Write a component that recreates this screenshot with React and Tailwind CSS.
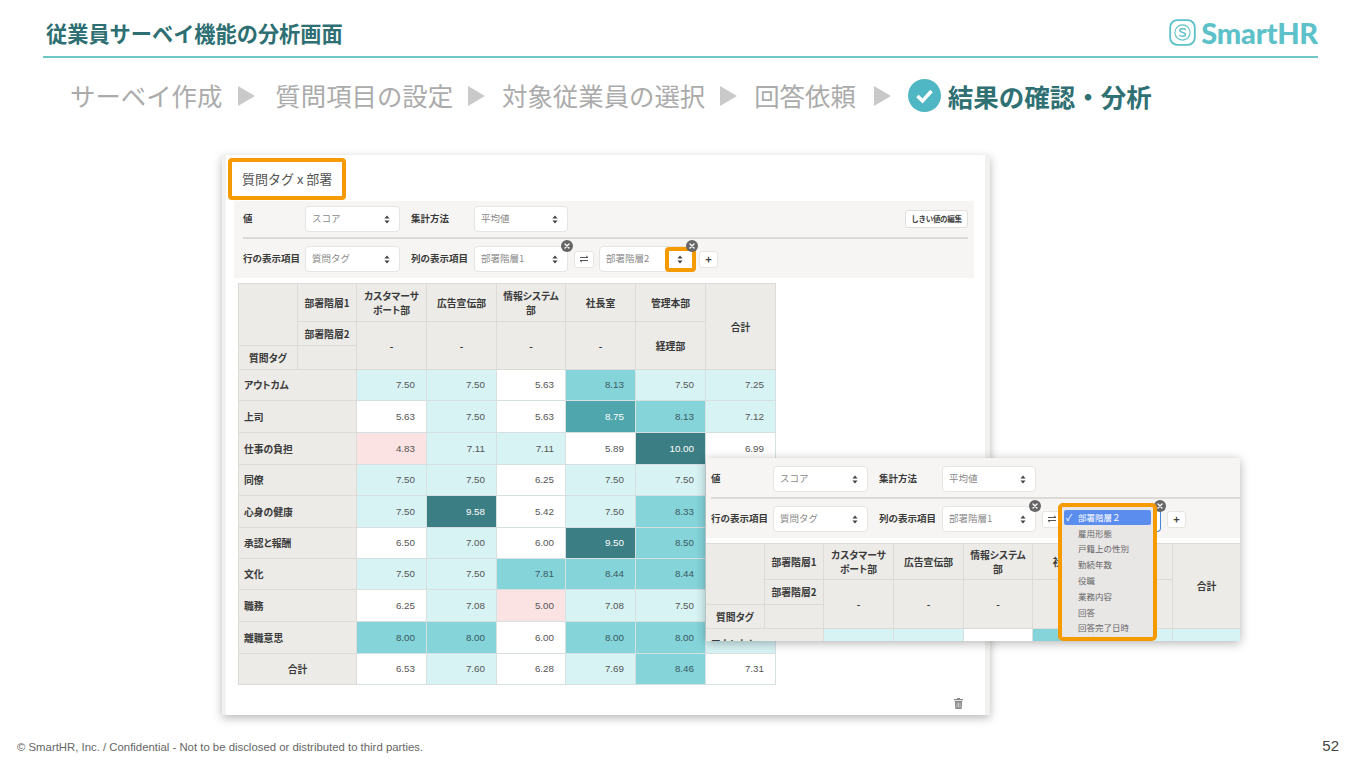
import React from "react";

const CJK = '"Noto Sans CJK JP","Noto Sans",sans-serif';

const Chevrons = () => (
  <svg width="6" height="9" viewBox="0 0 6 9" className="shrink-0">
    <path d="M3 0.5 L5.6 3.6 H0.4 Z M3 8.5 L0.4 5.4 H5.6 Z" fill="#444" />
  </svg>
);

const Badge = ({ className }) => (
  <span className={"absolute w-[12px] h-[12px] rounded-full bg-[#666] flex items-center justify-center z-20 " + className}>
    <svg width="6" height="6" viewBox="0 0 6 6">
      <path d="M1 1 L5 5 M5 1 L1 5" stroke="#fff" strokeWidth="1.4" strokeLinecap="round" />
    </svg>
  </span>
);

const Select = ({ label, w = "w-[95px]", children, className = "" }) => (
  <div className={"relative h-[26px] bg-white rounded-[4px] border border-[#e6e5e2] flex items-center justify-between pl-[6px] pr-[9px] shrink-0 " + w + " " + className}>
    <span className="text-[9.5px] text-[#8a8a8a] leading-none">{label}</span>
    <Chevrons />
    {children}
  </div>
);

const Label = ({ children, w }) => (
  <span className={"text-[9.5px] font-bold text-[#3a3a3a] leading-none shrink-0 " + w}>{children}</span>
);

const Toolbar = ({ highlight }) => (
  <div className="w-[740px] h-[77px] bg-[#f6f5f3] pl-[9px] pr-[6px] pt-[5px] shrink-0">
    <div className="flex items-center h-[26px]">
      <Label w="w-[62px]">値</Label>
      <Select label="スコア" />
      <Label w="w-[63px] ml-[11px]">集計方法</Label>
      <Select label="平均値" w="w-[94px]" />
      {highlight && (
        <button className="ml-auto h-[18px] w-[63px] bg-white border border-[#e0dfdc] rounded-[3px] text-[7.5px] tracking-[-0.3px] font-bold text-[#444] leading-none">しきい値の編集</button>
      )}
    </div>
    <div className="h-[2px] bg-[#dcdad7] mt-[5px] mb-[7px]" />
    <div className="flex items-center h-[26px]">
      <Label w="w-[62px]">行の表示項目</Label>
      <Select label="質問タグ" />
      <Label w="w-[63px] ml-[11px]">列の表示項目</Label>
      <Select label="部署階層1" w="w-[94px]">
        <Badge className="-top-[7px] -right-[6px]" />
      </Select>
      <button className="ml-[6px] w-[20px] h-[17px] bg-white border border-[#e6e5e2] rounded-[3px] flex items-center justify-center">
        <svg width="10" height="8" viewBox="0 0 10 8">
          <path d="M1 2.5 H9 L7 0.8 M9 5.5 H1 L3 7.2" fill="none" stroke="#444" strokeWidth="0.9" />
        </svg>
      </button>
      <Select label="部署階層2" w="w-[94px] ml-[5px]" className={highlight ? "" : "border-r-[#4c84d8] border-b-[#4c84d8]"}>
        <Badge className="-top-[7px] -right-[6px]" />
        {highlight && (
          <span className="absolute left-[65px] top-0 w-[31px] h-[25px] border-[4px] border-[#f59a00] rounded-[4px] z-10" />
        )}
      </Select>
      <button className="ml-[6px] w-[19px] h-[17px] bg-white border border-[#e6e5e2] rounded-[3px] text-[11px] font-bold text-[#444] leading-none">+</button>
    </div>
  </div>
);

const C = {
  W: "bg-white text-[#555]",
  L: "bg-[#d7f3f4] text-[#555]",
  M: "bg-[#84d4da] text-[#3a5a5e]",
  S: "bg-[#4fa6ac] text-white",
  D: "bg-[#3b7e84] text-white",
  P: "bg-[#fbe3e3] text-[#555]",
};

const rows = [
  { h: "h-[31px]", n: "アウトカム", v: [["7.50", "L"], ["7.50", "L"], ["5.63", "W"], ["8.13", "M"], ["7.50", "L"], ["7.25", "L"]] },
  { h: "h-[32px]", n: "上司", v: [["5.63", "W"], ["7.50", "L"], ["5.63", "W"], ["8.75", "S"], ["8.13", "M"], ["7.12", "L"]] },
  { h: "h-[32px]", n: "仕事の負担", v: [["4.83", "P"], ["7.11", "L"], ["7.11", "L"], ["5.89", "W"], ["10.00", "D"], ["6.99", "W"]] },
  { h: "h-[31px]", n: "同僚", v: [["7.50", "L"], ["7.50", "L"], ["6.25", "W"], ["7.50", "L"], ["7.50", "L"], ["", "W"]] },
  { h: "h-[32px]", n: "心身の健康", v: [["7.50", "L"], ["9.58", "D"], ["5.42", "W"], ["7.50", "L"], ["8.33", "M"], ["", "W"]] },
  { h: "h-[31px]", n: "承認と報酬", v: [["6.50", "W"], ["7.00", "L"], ["6.00", "W"], ["9.50", "D"], ["8.50", "M"], ["", "W"]] },
  { h: "h-[31px]", n: "文化", v: [["7.50", "L"], ["7.50", "L"], ["7.81", "M"], ["8.44", "M"], ["8.44", "M"], ["", "W"]] },
  { h: "h-[32px]", n: "職務", v: [["6.25", "W"], ["7.08", "L"], ["5.00", "P"], ["7.08", "L"], ["7.50", "L"], ["", "W"]] },
  { h: "h-[32px]", n: "離職意思", v: [["8.00", "M"], ["8.00", "M"], ["6.00", "W"], ["8.00", "M"], ["8.00", "M"], ["", "L"]] },
  { h: "h-[31px]", n: "合計", total: true, v: [["6.53", "W"], ["7.60", "L"], ["6.28", "W"], ["7.69", "L"], ["8.46", "M"], ["7.31", "W"]] },
];

const head = "bg-[#ecebe8] border border-[#dcdbd8] text-[9.8px] [font-feature-settings:'palt'] font-bold text-[#3a3a3a] text-center align-middle leading-[14px] p-0";
const depts = ["カスタマーサポート部", "広告宣伝部", "情報システム部", "社長室", "管理本部"];

const PivotTable = ({ compact }) => (
  <table className={"table-fixed border-collapse shrink-0 " + (compact ? "w-[535px]" : "w-[537px]")}>
    <colgroup>
      <col className="w-[59px]" />
      <col className="w-[59px]" />
      <col className="w-[70px]" />
      <col className="w-[70px]" />
      <col className="w-[69px]" />
      <col className="w-[70px]" />
      <col className="w-[70px]" />
      <col className={compact ? "w-[68px]" : "w-[70px]"} />
    </colgroup>
    <thead>
      <tr className={compact ? "h-[36px]" : "h-[38px]"}>
        <th rowSpan={2} className={head}></th>
        <th className={head}>部署階層1</th>
        {depts.map((d) => (
          <th key={d} className={head + " px-[5px]"}>{d}</th>
        ))}
        <th rowSpan={3} className={head}>合計</th>
      </tr>
      <tr className={compact ? "h-[25px]" : "h-[24px]"}>
        <th className={head}>部署階層2</th>
        {["-", "-", "-", "-", "経理部"].map((d, i) => (
          <th key={i} rowSpan={2} className={head}>{d}</th>
        ))}
      </tr>
      <tr className="h-[24px]">
        <th className={head}>質問タグ</th>
        <th className={head}></th>
      </tr>
    </thead>
    <tbody>
      {rows.map((r) => (
        <tr key={r.n} className={r.h}>
          <th colSpan={2} className={head + (r.total ? "" : " !text-left !pl-[5px]")}>{r.n}</th>
          {r.v.map(([t, k], i) => (
            <td
              key={i}
              className={"border border-[#d6e0e0] text-right pr-[11px] text-[9.8px] leading-none p-0 " + C[k]}
              style={{ fontFamily: '"Liberation Sans",sans-serif' }}
            >
              {t}
            </td>
          ))}
        </tr>
      ))}
    </tbody>
  </table>
);

const menu = ["雇用形態", "戸籍上の性別", "勤続年数", "役職", "業務内容", "回答", "回答完了日時"];

const Step = ({ children }) => <span className="text-[25.4px] text-[#ababab] leading-none whitespace-nowrap">{children}</span>;
const Arrow = () => (
  <svg width="17" height="20" viewBox="0 0 17 20" className="shrink-0 block">
    <path d="M0 0 L17 10 L0 20 Z" fill="#c9c9c9" />
  </svg>
);

export default function App() {
  return (
    <div className="relative w-[1360px] h-[765px] bg-white overflow-hidden flex flex-col" style={{ fontFamily: CJK }}>
      <header className="ml-[43px] mr-[42px] h-[58px] border-b-2 border-[#6fc8c6] flex items-end justify-between pl-[3px] pb-[9px] shrink-0">
        <h1 className="text-[21.2px] font-bold text-[#2d6f72] leading-none mb-[4px]">従業員サーベイ機能の分析画面</h1>
        <div className="flex items-center gap-[5px]">
          <svg width="27" height="27" viewBox="0 0 27 27">
            <rect x="1.2" y="1.2" width="24.6" height="24.6" rx="7" fill="none" stroke="#5cc1c8" strokeWidth="1.8" />
            <circle cx="13.5" cy="13.5" r="7.6" fill="none" stroke="#5cc1c8" strokeWidth="1.1" />
            <path d="M16.4 10.6 C15.4 9.4 10.8 9.2 10.8 11.6 C10.8 14 16.4 12.9 16.4 15.4 C16.4 17.8 11.6 17.6 10.6 16.4" fill="none" stroke="#5cc1c8" strokeWidth="1.4" strokeLinecap="round" />
          </svg>
          <span className="text-[29px] font-black text-[#5cc1c8] leading-none tracking-[-0.2px]" style={{ fontFamily: 'Lato,"Noto Sans",sans-serif' }}>SmartHR</span>
        </div>
      </header>

      <div className="h-[75px] flex items-center pl-[70px] shrink-0">
        <Step>サーベイ作成</Step>
        <span className="ml-[16px] mr-[20px]"><Arrow /></span>
        <Step>質問項目の設定</Step>
        <span className="ml-[15px] mr-[17px]"><Arrow /></span>
        <Step>対象従業員の選択</Step>
        <span className="ml-[15px] mr-[17px]"><Arrow /></span>
        <Step>回答依頼</Step>
        <span className="ml-[18px] mr-[17px]"><Arrow /></span>
        <svg width="33" height="33" viewBox="0 0 33 33" className="shrink-0 mr-[7px]">
          <circle cx="16.5" cy="16.5" r="16.5" fill="#4fb7c4" />
          <path d="M9.5 17 L14.5 22 L23.5 12" fill="none" stroke="#fff" strokeWidth="3.6" />
        </svg>
        <span className="text-[25.5px] font-bold text-[#2f7073] leading-none">結果の確認・分析</span>
      </div>

      <main className="ml-[222px] mt-[22px] w-[768px] h-[560px] bg-white border-l-4 border-r-[5px] border-[#f1f1f0] shadow-[0_3px_9px_rgba(0,0,0,0.28)] flex flex-col shrink-0">
        <div className="relative h-[46px] shrink-0">
          <span className="absolute left-[2px] top-[3px] w-[118px] h-[42px] border-[4px] border-[#f59a00] rounded-[4px] bg-white flex items-center pl-[10px] pb-[2px] text-[13px] text-[#555] leading-none">質問タグ x 部署</span>
        </div>
        <div className="ml-[8px]"><Toolbar highlight /></div>
        <div className="ml-[12px] mt-[5px]"><PivotTable /></div>
        <div className="mt-auto flex justify-end pr-[22px] pb-[6px]">
          <svg width="9" height="11" viewBox="0 0 9 11">
            <path d="M3 0 H6 V1 H9 V2.2 H0 V1 H3 Z M0.8 3 H8.2 L7.6 11 H1.4 Z" fill="#8a8a8a" />
            <path d="M3 4.5 V9.5 M4.5 4.5 V9.5 M6 4.5 V9.5" stroke="#fff" strokeWidth="0.5" />
          </svg>
        </div>
      </main>

      <footer className="flex items-center justify-between pl-[17px] pr-[21px] mt-[27px]" style={{ fontFamily: '"Liberation Sans",sans-serif' }}>
        <span className="text-[11.36px] text-[#666] leading-none">© SmartHR, Inc. / Confidential - Not to be disclosed or distributed to third parties.</span>
        <span className="text-[15px] text-[#444] leading-none -mt-[4px]">52</span>
      </footer>

      <div className="absolute left-[706px] top-[458px] w-[534px] h-[183px] bg-white overflow-hidden shadow-[0_2px_10px_rgba(0,0,0,0.3)] z-10">
        <div className="h-[3px] w-full bg-[#f6f5f3]" />
        <div className="-ml-[4px]"><Toolbar /></div>
        <div className="-ml-[1px] mt-[5px]"><PivotTable compact /></div>
      </div>

      <div className="absolute left-[1058px] top-[503px] w-[99px] h-[138px] border-[4px] border-[#f59a00] rounded-[5px] bg-[#e9e7e6] z-20 px-[2px] pt-[3px]">
        <div className="h-[15px] w-full rounded-[2px] bg-[#5b8def] flex items-center text-[8.5px] text-white leading-none">
          <span className="w-[14px] pl-[2px] text-[9px]">✓</span>部署階層２
        </div>
        {menu.map((m) => (
          <div key={m} className="h-[15.8px] flex items-center pl-[14px] text-[8.5px] text-[#666] leading-none">{m}</div>
        ))}
      </div>
    </div>
  );
}
